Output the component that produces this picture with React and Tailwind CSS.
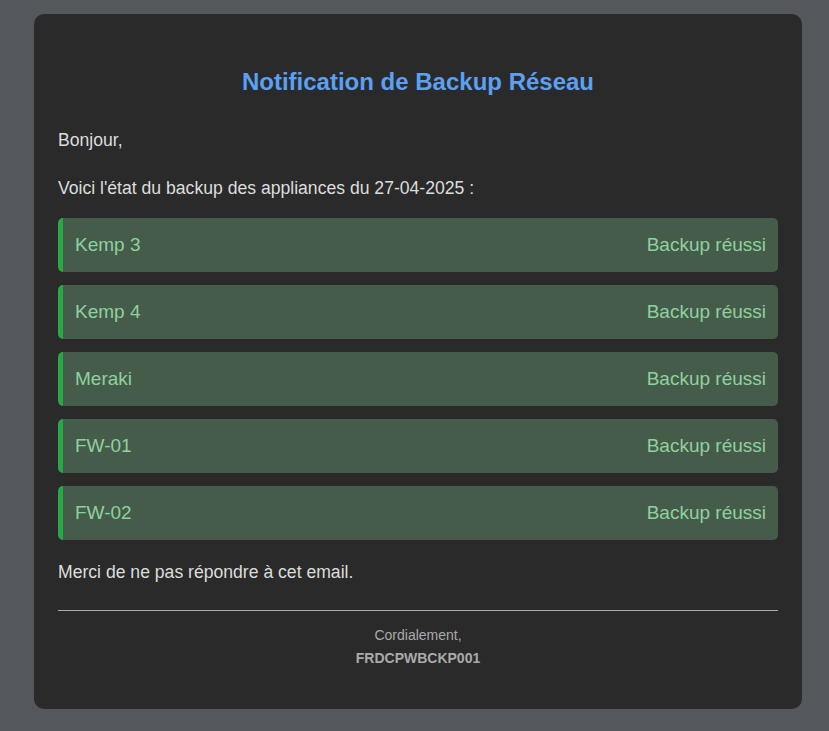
const appliances = ['Kemp 3', 'Kemp 4', 'Meraki', 'FW-01', 'FW-02'];

export default function App() {
  return (
    <div className="min-h-screen bg-[#54575c] pl-[34px] pt-[14px] pb-[23px] font-['Liberation_Sans',Arial,sans-serif]">
      <div className="w-[768px] rounded-[10px] bg-[#2a2a2a] px-6 pt-[55px] pb-[43px] text-[#dddddd]">
        <h2 className="text-center text-[24px] font-bold leading-[26px] text-[#5ca0f2]">
          Notification de Backup Réseau
        </h2>

        <p className="mt-[36px] text-[17.6px] leading-[18px]">Bonjour,</p>
        <p className="mt-[30px] text-[17.6px] leading-[18px]">
          Voici l'état du backup des appliances du 27-04-2025 :
        </p>

        <div className="mt-[21px] flex flex-col gap-[13px]">
          {appliances.map((name) => (
            <div
              key={name}
              className="flex h-[54px] items-center justify-between rounded-[5px] border-l-[5px] border-[#28a745] bg-[#465c4b] px-3 text-[19px] text-[#8fd19e]"
            >
              <span>{name}</span>
              <span>Backup réussi</span>
            </div>
          ))}
        </div>

        <p className="mt-[23px] text-[17.6px] leading-[18px]">Merci de ne pas répondre à cet email.</p>

        <div className="mt-[29px] border-t border-[#aaaaaa]" />

        <div className="mt-[16px] text-center text-[14px] leading-[16px] text-[#aaaaaa]">
          <p>Cordialement,</p>
          <p className="mt-[7px] font-bold">FRDCPWBCKP001</p>
        </div>
      </div>
    </div>
  );
}
